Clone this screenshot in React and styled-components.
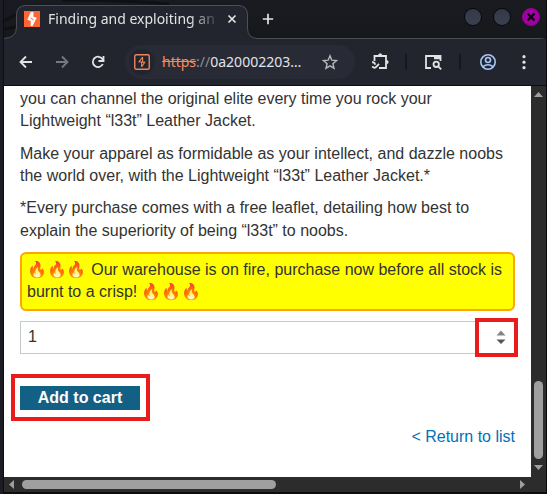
import React from "react";
import styled, { createGlobalStyle } from "styled-components";

const GlobalStyle = createGlobalStyle`
  *, *::before, *::after { box-sizing: border-box; }
  html, body { margin: 0; padding: 0; overflow: hidden; background: #15161b; }
  button, input { font: inherit; }
`;

const Window = styled.div`
  width: 547px;
  height: 494px;
  display: flex;
  flex-direction: column;
  padding: 0 1px 2px 4px;
  overflow: hidden;
  background: linear-gradient(90deg, #1c1c25 0 3px, #0c0c12 3px 546px, #09090d 546px);
  font-family: "Noto Sans", sans-serif;
`;

const TabStrip = styled.header`
  position: relative;
  height: 39px;
  flex: none;
  display: flex;
  align-items: flex-start;
  background: linear-gradient(#1a1b20, #17181c);
`;

const TabOutline = styled.svg`
  position: absolute;
  left: 0;
  top: 0;
`;

const Tab = styled.div`
  position: relative;
  display: flex;
  align-items: center;
  width: 232px;
  height: 28px;
  margin: 5px 0 0 12px;
  padding-left: 8px;
`;

const TabTitle = styled.span`
  width: 168px;
  height: 22px;
  margin-left: 8px;
  white-space: nowrap;
  font-size: 14px;
  line-height: 22px;
  color: #e3e3e3;
  mask-image: linear-gradient(90deg, #000 142px, transparent 172px);
`;

const PlainButton = styled.button`
  display: flex;
  padding: 0;
  border: 0;
  background: none;
  color: ${(p) => p.$color || "#e3e3e3"};
  margin-left: ${(p) => p.$gap || 0}px;
`;

const NewTab = styled(PlainButton)`
  position: relative;
  margin: 13px 0 0 14px;
`;

const WindowControls = styled.div`
  position: relative;
  display: flex;
  align-items: center;
  gap: 11px;
  margin: 8px 6px 0 auto;
`;

const Control = styled.span`
  display: flex;
  width: 18px;
  height: 18px;
  border-radius: 50%;
  border: 1px solid ${(p) => (p.$close ? "#970097" : "#090a0d")};
  background: ${(p) => (p.$close ? "#a000a0" : "linear-gradient(#343947, #3b404e)")};
  align-items: center;
  justify-content: center;
`;

const Toolbar = styled.nav`
  height: 46px;
  flex: none;
  display: flex;
  align-items: center;
  padding: 0 0 0 14px;
  background: #23252e;
`;

const AddressBar = styled.div`
  display: flex;
  align-items: center;
  width: 230px;
  height: 34px;
  margin-left: 19px;
  border-radius: 17px;
  background: #282a35;
`;

const SiteBadge = styled.span`
  display: flex;
  align-items: center;
  justify-content: center;
  width: 26px;
  height: 26px;
  margin-left: 4px;
  border-radius: 50%;
  background: #23252e;
`;

const Url = styled.span`
  width: 142px;
  margin-left: 7px;
  white-space: nowrap;
  font-size: 14px;
  line-height: 20px;
  color: #e3e3e8;
`;

const Scheme = styled.s`
  color: #f28b60;
`;

const Slashes = styled.span`
  color: #8d8f97;
`;

const Divider = styled.span`
  width: 2px;
  height: 16px;
  margin-left: ${(p) => p.$gap}px;
  background: #17181d;
`;

const Viewport = styled.div`
  display: grid;
  grid-template: 391px 15px / 527px 15px;
  margin-top: 1px;
  background: #2c2c2c;
`;

const Page = styled.main`
  display: flex;
  flex-direction: column;
  overflow: hidden;
  padding: 1.8px 16px 0;
  background: #fff;
  color: #333332;
  font: 16px/22.4px "Liberation Sans", Arial, sans-serif;
`;

const Paragraph = styled.p`
  flex: none;
  margin: 0 0 10px;
`;

const Notice = styled(Paragraph)`
  margin-bottom: 10px;
  padding: 5.2px 5px 5.6px;
  line-height: 22px;
  border: 2px solid #ffa500;
  border-radius: 6px;
  background: #ff0;
  font-family: "Liberation Sans", Arial, "Noto Color Emoji", sans-serif;
`;

const QuantityRow = styled.div`
  position: relative;
  flex: none;
  display: flex;
  align-items: center;
  height: 33px;
  padding: 0 8px 1px 7px;
  border: 1px solid #c5cbcb;
`;

const Quantity = styled.span`
  flex: 1;
`;

const Highlight = styled.span`
  position: absolute;
  left: ${(p) => p.$left}px;
  top: ${(p) => p.$top}px;
  width: ${(p) => p.$width}px;
  height: ${(p) => p.$height}px;
  border: 4px solid #e81b1d;
  pointer-events: none;
`;

const CartArea = styled.div`
  position: relative;
  flex: none;
  width: 120px;
  height: 24px;
  margin-top: 32.4px;
`;

const CartButton = styled.button`
  display: block;
  width: 120px;
  height: 24px;
  padding: 0;
  border: 0;
  background: #136085;
  color: #fff;
  font-weight: 700;
  line-height: 24px;
`;

const ReturnLink = styled.a`
  align-self: flex-end;
  margin-top: 16px;
  color: #0071b8;
  text-decoration: none;
`;

const VerticalBar = styled.div`
  display: flex;
  flex-direction: column;
  align-items: center;
  padding-top: 6px;
`;

const VerticalThumb = styled.span`
  width: 9px;
  height: 78px;
  margin: 284px 0 6px;
  border-radius: 5px;
  background: #9f9f9f;
`;

const HorizontalBar = styled.div`
  display: flex;
  align-items: center;
  padding-left: 5px;
`;

const HorizontalThumb = styled.span`
  width: 254px;
  height: 9px;
  margin: 0 244px 0 8px;
  border-radius: 5px;
  background: #9f9f9f;
`;

const Arrow = styled.svg`
  display: block;
  flex: none;
  fill: #9f9f9f;
`;

function Stroke({ size = 18, width = 1.8, children }) {
  return (
    <svg width={size} height={size} viewBox={`0 0 ${size} ${size}`} fill="none" stroke="currentColor" strokeWidth={width}>
      {children}
    </svg>
  );
}

export default function App() {
  return (
    <>
      <GlobalStyle />
      <Window>
        <TabStrip>
          <TabOutline width="542" height="39" viewBox="0 0 542 39">
            <path d="M0 29 Q30 25 50 12 M0 21 L20 10 M58 0 Q120 0 165 4" fill="none" stroke="#101114" strokeWidth="3" />
            <path d="M0 39 V38.5 Q12 38.5 12 27 V14 Q12 5.5 22 5.5 H234 Q243.500 5.500 243.500 15 V28 Q243.500 38.500 254 38.500 H535 L542 39 Z" fill="#23252e" />
            <path d="M0 38.500 Q12.500 38 12.500 27 V15 Q12.500 5.500 22 5.500 H234 Q243.500 5.500 243.500 15 V28 Q243.500 38.500 254 38.500 H535 Q540 38.500 542 40" fill="none" stroke="#4d4f57" />
          </TabOutline>
          <Tab>
            <svg width="16" height="16" viewBox="0 0 16 16">
              <path fill="#ff6633" d="M0 0h16v16H0z" />
              <path fill="#fff" d="M6.800 1h2.600v4.800l3.300 1-4.200 8.200H6.700V10L3.300 8.800z" />
              <path fill="none" stroke="#ff6633" strokeWidth="1" d="M6.500 7.200l3.200 1.600" />
            </svg>
            <TabTitle>Finding and exploiting an</TabTitle>
            <PlainButton aria-label="Close tab" $gap={11}>
              <Stroke size={10} width={1.7}><path d="M1.500 1.500l7 7M8.500 1.500l-7 7" /></Stroke>
            </PlainButton>
          </Tab>
          <NewTab aria-label="New tab">
            <Stroke size={12} width={1.700}><path d="M6 .8v10.400M.8 6h10.400" /></Stroke>
          </NewTab>
          <WindowControls>
            <Control />
            <Control />
            <Control $close>
              <svg width="10" height="10" viewBox="0 0 10 10" stroke="#08040a" strokeWidth="2.300"><path d="M1.500 1.500l7 7M8.500 1.500l-7 7" /></svg>
            </Control>
          </WindowControls>
        </TabStrip>
        <Toolbar>
          <PlainButton aria-label="Back"><Stroke size={16}><path d="M14 8H3M8 2.500L2.500 8 8 13.500" /></Stroke></PlainButton>
          <PlainButton aria-label="Forward" $gap={20} $color="#777980"><Stroke size={16}><path d="M2 8h11M8 2.500L13.500 8 8 13.500" /></Stroke></PlainButton>
          <PlainButton aria-label="Reload" $gap={20}>
            <Stroke size={16}><path d="M12.800 10A5.200 5.200 0 1 1 12.600 5.400L14 7M13.500 2v5H8.500" /></Stroke>
          </PlainButton>
          <AddressBar>
            <SiteBadge>
              <svg width="16" height="16" viewBox="0 0 16 16" fill="none" stroke="#ec855d">
                <rect x=".75" y=".75" width="14.500" height="14.500" rx="1.500" strokeWidth="1.400" />
                <path d="M8.600 3L5 7.800l5.700.5L7.600 13M8.600 3v4.500M7.600 8.500V13" strokeWidth="1.100" />
              </svg>
            </SiteBadge>
            <Url><Scheme>https</Scheme><Slashes>://</Slashes>0a20002203…</Url>
            <PlainButton aria-label="Bookmark" $gap={18} $color="#b8b9bd">
              <Stroke size={16} width={1.400}><path d="M8 1.800l1.800 4.400 4.700.4-3.600 3.100 1.100 4.600L8 11.900l-4 2.400 1.100-4.600-3.600-3.100 4.700-.4z" /></Stroke>
            </PlainButton>
          </AddressBar>
          <PlainButton aria-label="Extensions" $gap={16}>
            <Stroke><path d="M3.500 6V3H15v12H8M3.500 5.500V8" /><path d="M7.300 2.500a1.900 1.900 0 0 1 3.800 0zM15.500 7.200a1.900 1.900 0 0 1 0 3.800z" fill="currentColor" strokeWidth=".4" /><path d="M1 9.300q3-.3 3 2.400M1.300 13.200q1.500 2.600 3.700.8l3-3.200" /></Stroke>
          </PlainButton>
          <Divider $gap={16} />
          <PlainButton aria-label="Side search" $gap={17}>
            <Stroke><path d="M7 15H2V3h14.500v5" /><path d="M10 4.500h6.500" strokeWidth="3.500" /><circle cx="12.200" cy="11.300" r="2.700" /><path d="M14.200 13.300l3 3" /></Stroke>
          </PlainButton>
          <Divider $gap={17} />
          <PlainButton aria-label="Profile" $gap={18} $color="#a8c7fa">
            <Stroke width={1.600}><circle cx="9" cy="9" r="7.200" /><circle cx="9" cy="7" r="2.500" /><path d="M3.700 13.800q5.300-4 10.600 0" /></Stroke>
          </PlainButton>
          <PlainButton aria-label="Menu" $gap={25}>
            <svg width="4" height="16" viewBox="0 0 4 16" fill="currentColor"><circle cx="2" cy="2.700" r="1.600" /><circle cx="2" cy="8.200" r="1.600" /><circle cx="2" cy="13.700" r="1.600" /></svg>
          </PlainButton>
        </Toolbar>
        <Viewport>
          <Page>
            <Paragraph>you can channel the original elite every time you rock your<br />Lightweight “l33t” Leather Jacket.</Paragraph>
            <Paragraph>Make your apparel as formidable as your intellect, and dazzle noobs<br />the world over, with the Lightweight “l33t” Leather Jacket.*</Paragraph>
            <Paragraph>*Every purchase comes with a free leaflet, detailing how best to<br />explain the superiority of being “l33t” to noobs.</Paragraph>
            <Notice>🔥🔥🔥 Our warehouse is on fire, purchase now before all stock is<br />burnt to a crisp! 🔥🔥🔥</Notice>
            <QuantityRow>
              <Quantity>1</Quantity>
              <svg width="10" height="14" viewBox="0 0 10 14"><path d="M.5 5.500L5 .5l4.500 5z" fill="#858585" /><path d="M.5 9.500h9L5 14z" fill="#555" /></svg>
              <Highlight $left={454} $top={-4} $width={43} $height={39} />
            </QuantityRow>
            <CartArea>
              <CartButton>Add to cart</CartButton>
              <Highlight $left={-9} $top={-12} $width={139} $height={47} />
            </CartArea>
            <ReturnLink>&lt; Return to list</ReturnLink>
          </Page>
          <VerticalBar>
            <Arrow width="9" height="5"><path d="M0 5L4.500 0 9 5z" /></Arrow>
            <VerticalThumb />
            <Arrow width="9" height="5"><path d="M0 0h9L4.500 5z" /></Arrow>
          </VerticalBar>
          <HorizontalBar>
            <Arrow width="5" height="9"><path d="M5 0v9L0 4.500z" /></Arrow>
            <HorizontalThumb />
            <Arrow width="5" height="9"><path d="M0 0v9l5-4.500z" /></Arrow>
          </HorizontalBar>
        </Viewport>
      </Window>
    </>
  );
}
